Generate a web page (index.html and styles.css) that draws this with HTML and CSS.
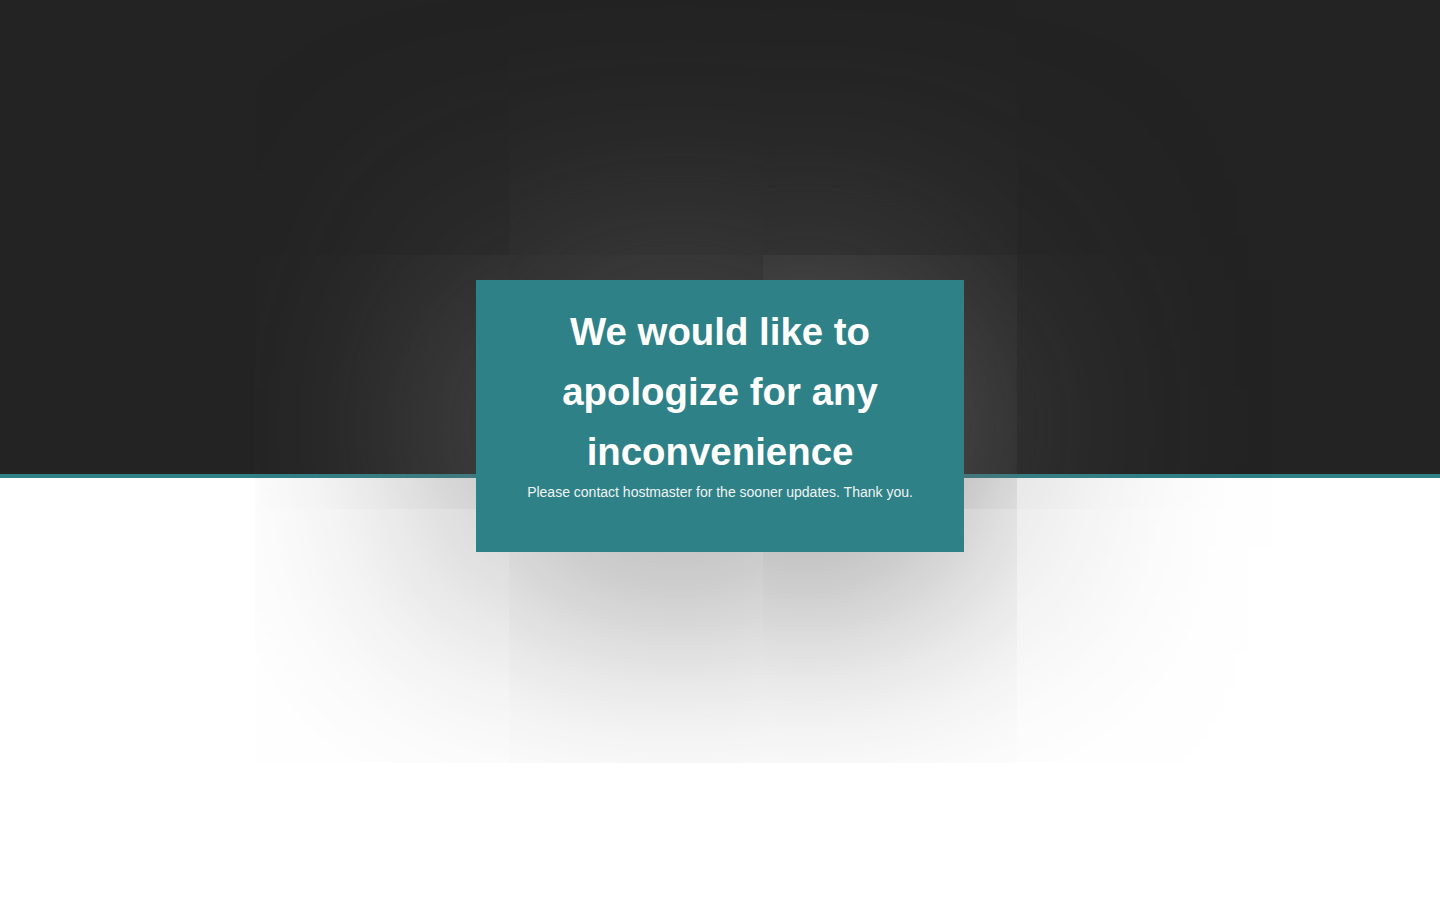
FILE: index.html
```html
<!DOCTYPE html>
<html lang="en">
<head>
<meta charset="utf-8">
<title>Maintenance</title>
<link rel="stylesheet" href="styles.css">
</head>
<body>
<div class="top"></div>
<main class="card">
  <h1 class="title">We would like to apologize for any inconvenience</h1>
  <p class="note">Please contact hostmaster for the sooner updates. Thank you.</p>
</main>
</body>
</html>
```
FILE: styles.css
```css
html, body {
  margin: 0;
  padding: 0;
  background: #ffffff;
  font-family: "Liberation Sans", Arial, sans-serif;
}
body {
  min-height: 900px;
  overflow: hidden;
}
.top {
  height: 474px;
  background: #232323;
  border-bottom: 4px solid #2e8187;
}
.card {
  position: relative;
  width: 488px;
  box-sizing: border-box;
  margin: -198px auto 0;
  padding: 22px 30px 52px;
  background: #2e8187;
  color: #ffffff;
  text-align: center;
  box-shadow: 0 10px 250px 10px rgba(105, 105, 105, 0.95);
}
.title {
  margin: 0;
  font-size: 38.4px;
  line-height: 60px;
  font-weight: bold;
}
.note {
  margin: 2px 0 0;
  font-size: 14px;
  line-height: 16px;
  color: #f0f4f4;
}
```
